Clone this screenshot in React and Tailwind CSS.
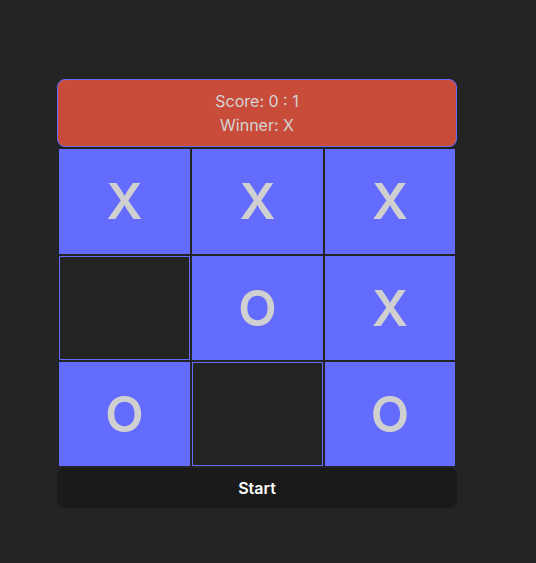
import React from "react";

const board = ["X", "X", "X", "", "O", "X", "O", "", "O"];

function Cell({ value }) {
  const filled = value !== "";
  return (
    <div
      className={
        "border border-solid border-[#646cff] flex items-center justify-center text-[50px] font-semibold text-[#d0d0d0] cursor-pointer " +
        (filled ? "bg-[#646cff]" : "bg-[#242424]")
      }
    >
      {value}
    </div>
  );
}

export default function App() {
  return (
    <div
      className="min-h-screen bg-[#242424] pt-[79px] pl-[57px]"
      style={{ fontFamily: "Inter, 'Noto Sans', sans-serif" }}
    >
      <div className="w-[400px] flex flex-col gap-[2px]">
        {/* Score */}
        <div className="h-[68px] flex flex-col justify-center bg-[#c94c3b] border border-[#646cff] rounded-lg text-center text-[16px] leading-6 text-[#d4d4d4]">
          <div>Score: 0 : 1</div>
          <div>Winner: X</div>
        </div>

        {/* Board */}
        <div className="grid grid-cols-[131px_131px_130px] grid-rows-[105px_104px_104px] gap-[2px] px-[2px]">
          {board.map((v, i) => (
            <Cell key={i} value={v} />
          ))}
        </div>

        <button className="h-10 bg-[#1a1a1a] rounded-lg text-white font-semibold text-[16px]">
          Start
        </button>
      </div>
    </div>
  );
}
